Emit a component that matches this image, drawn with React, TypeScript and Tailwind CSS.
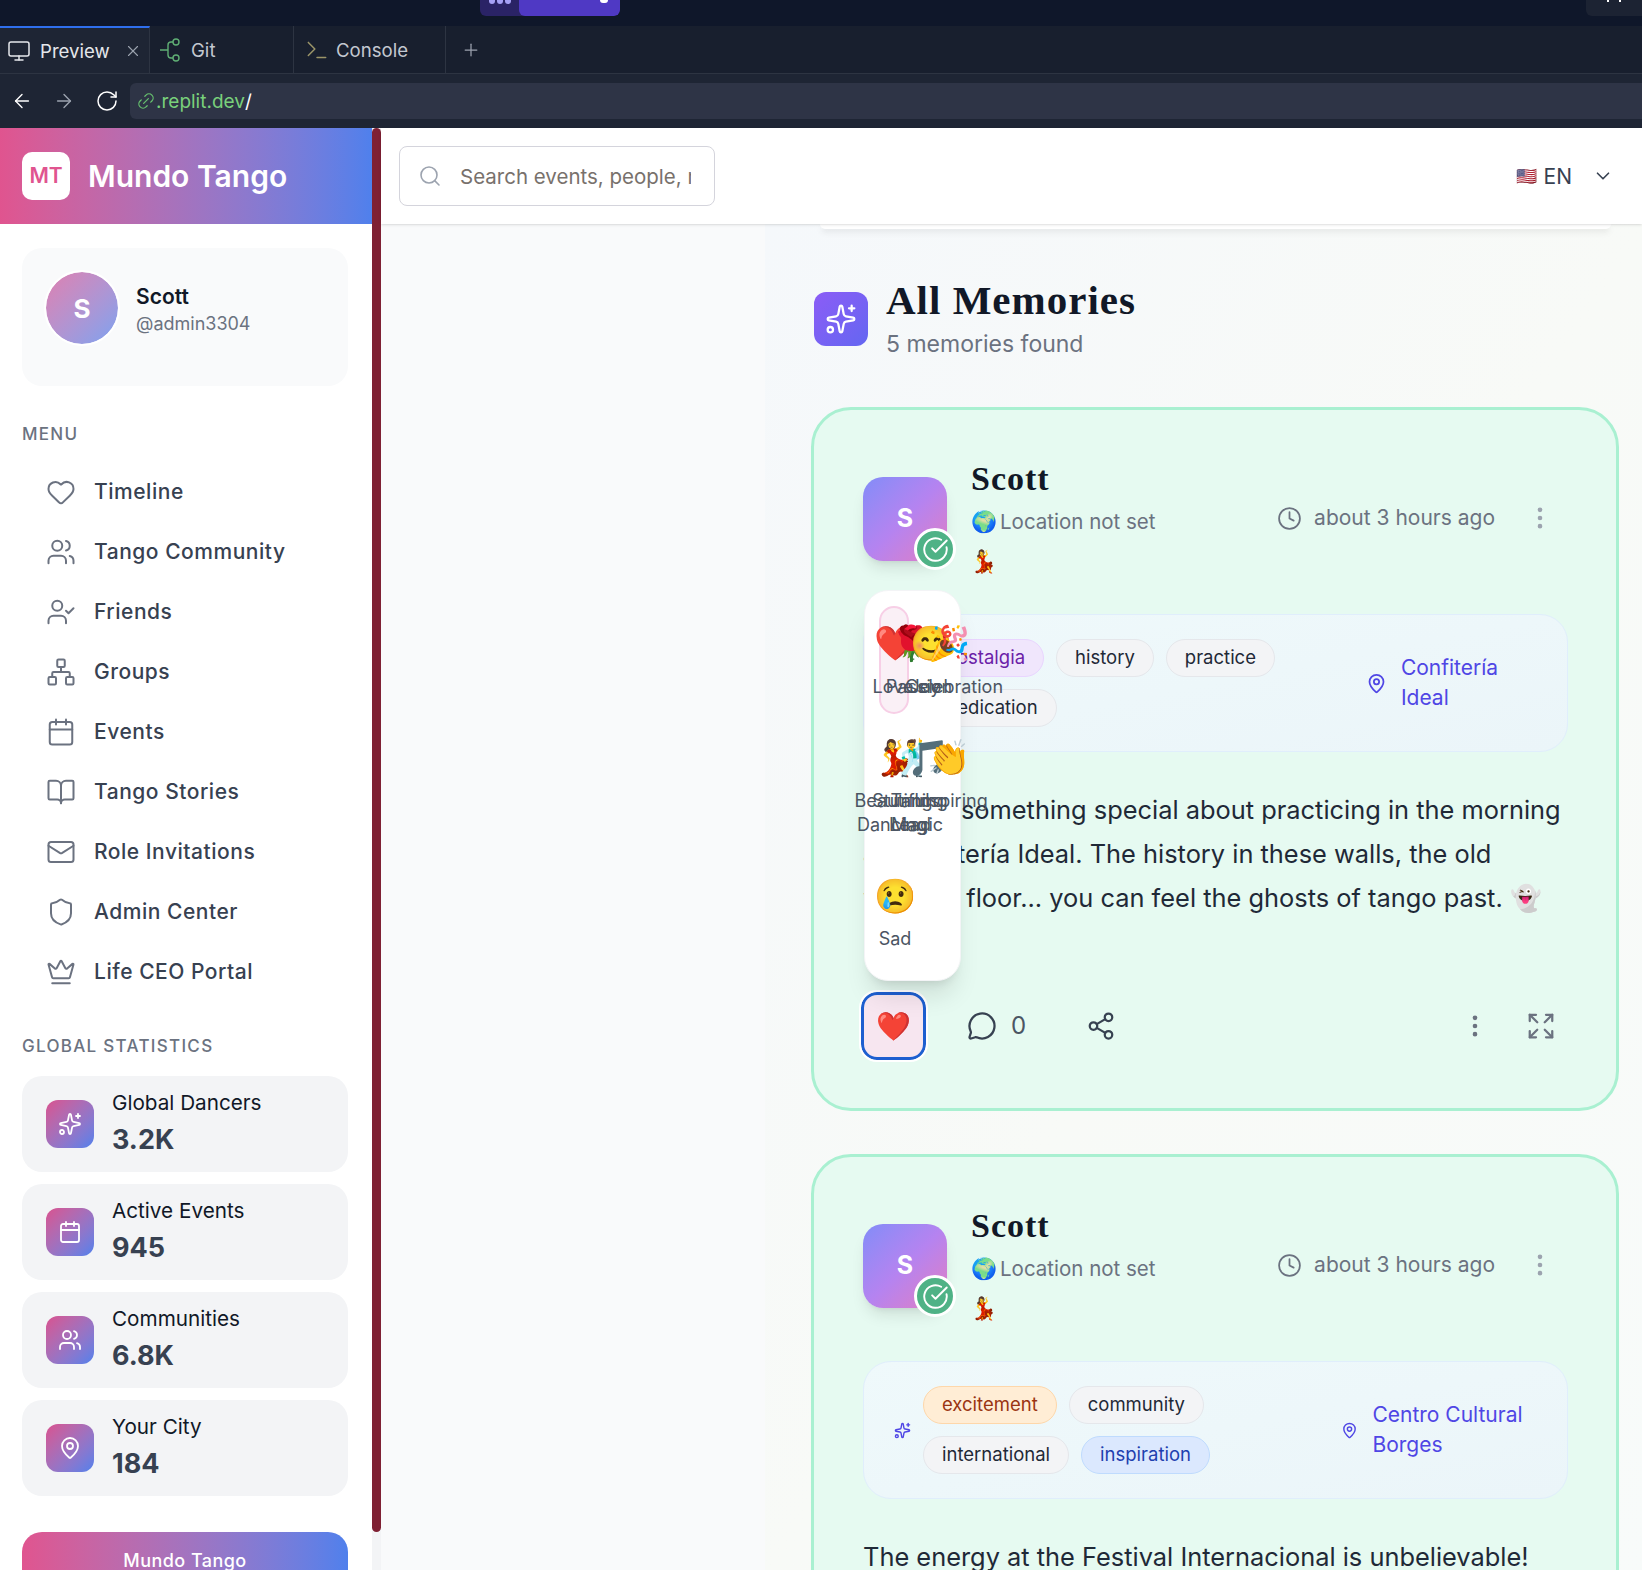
import React from "react";
import {
  ArrowLeft,
  ArrowRight,
  BookOpen,
  Calendar,
  ChevronDown,
  CircleCheckBig,
  Clock,
  Crown,
  EllipsisVertical,
  Expand,
  Heart,
  Link2,
  Mail,
  MapPin,
  MessageCircle,
  Monitor,
  Network,
  Plus,
  RotateCw,
  Search,
  Share2,
  Shield,
  Sparkles,
  Terminal,
  UserCheck,
  Users,
  X,
} from "lucide-react";

const menu = [
  { label: "Timeline", icon: Heart },
  { label: "Tango Community", icon: Users },
  { label: "Friends", icon: UserCheck },
  { label: "Groups", icon: Network },
  { label: "Events", icon: Calendar },
  { label: "Tango Stories", icon: BookOpen },
  { label: "Role Invitations", icon: Mail },
  { label: "Admin Center", icon: Shield },
  { label: "Life CEO Portal", icon: Crown },
];

const stats = [
  { label: "Global Dancers", value: "3.2K", icon: Sparkles },
  { label: "Active Events", value: "945", icon: Calendar },
  { label: "Communities", value: "6.8K", icon: Users },
  { label: "Your City", value: "184", icon: MapPin },
];

const tagStyles: Record<string, string> = {
  gray: "bg-[#f3f4f6] border-[#e5e7eb] text-[#1f2937]",
  purple: "bg-[#f0e6fc] border-[#e9d5ff] text-[#6b21a8]",
  orange: "bg-[#ffedd5] border-[#fed7aa] text-[#9a3412]",
  blue: "bg-[#dbe8fe] border-[#bfdbfe] text-[#1e40af]",
};

const GitIcon = () => (
  <svg width="24" height="24" viewBox="0 0 24 24" fill="none" stroke="#5fae74" strokeWidth="1.4" className="mr-[8px]">
    <path d="M1 12h8M9 12V7a3 3 0 0 1 3-3h2M9 12v5a3 3 0 0 0 3 3h2" />
    <circle cx="17" cy="4" r="3" />
    <circle cx="17" cy="20" r="3" />
  </svg>
);

const Tag = ({ label, tone = "gray" }: { label: string; tone?: string }) => (
  <span className={`h-[38px] px-[18px] rounded-full border flex items-center text-[18.5px] ${tagStyles[tone]}`}>
    {label}
  </span>
);

const MemoryCard = ({
  tags,
  place,
  pinSize,
  wideGap,
  text,
  children,
}: {
  tags: { label: string; tone?: string }[];
  place: string[];
  pinSize: number;
  wideGap?: boolean;
  text: string[];
  children?: React.ReactNode;
}) => (
  <div className="relative -ml-[1px] border-[3px] border-[#a9f0d1] rounded-[40px] bg-[#e6faf1] pt-[45px] pl-[49px] pr-[48px] pb-[48px] mb-[43px]">
    <div className="flex">
      <div className="relative w-[84px] h-[84px] mt-[22px] rounded-[20px] bg-gradient-to-br from-[#818cf8] via-[#b583f0] to-[#e27cc0] shadow-lg flex items-center justify-center text-white font-bold text-[25px] shrink-0">
        S
        <span className="absolute -right-[9px] -bottom-[9px] w-[42px] h-[42px] rounded-full bg-[#4fb286] border-[3px] border-white flex items-center justify-center">
          <CircleCheckBig size={27} className="text-white" strokeWidth={1.7} />
        </span>
      </div>
      <div className="ml-[24px] flex-1">
        <div className="font-['Liberation_Serif',serif] font-bold text-[34px] tracking-[1px] leading-[48px] text-[#111827]">Scott</div>
        <div className="flex items-center h-[38px]">
          <span className="text-[21px] w-[29px]">🌍</span>
          <span className="text-[20.5px] text-[#6b7280]">Location not set</span>
          <span className="ml-auto flex items-center text-[21px] text-[#6b7280] -translate-y-[4px]">
            <Clock size={25} strokeWidth={1.7} className="mr-[12px]" />
            about 3 hours ago
            <EllipsisVertical size={28} className="ml-[31px] mr-[14px] text-[#9ca3af]" />
          </span>
        </div>
        <div className="text-[22px] mt-[5px] -ml-[1px] leading-[30px]">💃</div>
      </div>
    </div>
    <div className="flex items-center mt-[38px] h-[138px] rounded-[28px] border border-[#e0eefc] bg-gradient-to-br from-[#eff9fb] to-[#ebf5f9] pl-[30px] pr-[30px]">
      <Sparkles size={17} className={`text-[#4f46e5] shrink-0 ${wideGap ? "mr-[16px]" : "mr-[12px]"}`} />
      <div className="flex flex-wrap gap-x-[12px] gap-y-[12px] w-[370px]">
        {tags.map((t) => (
          <Tag key={t.label} label={t.label} tone={t.tone} />
        ))}
      </div>
      <div className="ml-auto mr-[3px] w-[204px] flex justify-center items-center gap-[14px] text-[#4f46e5] text-[21px] leading-[30px]">
        <MapPin size={pinSize} className="shrink-0" />
        <div>
          {place.map((p) => (
            <div key={p}>{p}</div>
          ))}
        </div>
      </div>
    </div>
    <div className="mt-[36px] text-[25.4px] leading-[44px] text-[#1f2937] whitespace-nowrap">
      {text.map((l) => (
        <div key={l}>{l}</div>
      ))}
    </div>
    <div className="flex items-center mt-[72px] -ml-[2px]">
      <button className="w-[65px] h-[68px] rounded-[16px] border-[3px] border-[#1d5fd0] outline-2 outline-white bg-[#f7e6f0] text-[28px] flex items-center justify-center">
        ❤️
      </button>
      <MessageCircle size={30} strokeWidth={1.8} className="ml-[41px] text-[#374151]" />
      <span className="ml-[14px] text-[24px] text-[#4b5563]">0</span>
      <Share2 size={30} strokeWidth={1.8} className="ml-[60px] text-[#374151]" />
      <EllipsisVertical size={28} className="ml-auto text-[#6b7280]" />
      <Expand size={30} strokeWidth={1.8} className="ml-[37px] mr-[12px] text-[#6b7280]" />
    </div>
    {children}
  </div>
);

const ReactionPicker = () => {
  const top = [
    { e: "❤️", x: 30 },
    { e: "🌹", x: 46 },
    { e: "😊", x: 66 },
    { e: "🎉", x: 84 },
  ];
  const topLabels = [
    { t: "Love", x: 28 },
    { t: "Passion", x: 54 },
    { t: "Joy", x: 60 },
    { t: "Celebration", x: 89 },
  ];
  const mid = [
    { e: "💃", x: 30 },
    { e: "🕺", x: 48 },
    { e: "🎵", x: 64 },
    { e: "👏", x: 84 },
  ];
  const midLabels = [
    { t: ["Beautiful", "Dancing"], x: 27 },
    { t: ["Stunning", "Lead"], x: 45 },
    { t: ["Tango", "Magic"], x: 52 },
    { t: ["Inspiring"], x: 86 },
  ];
  return (
    <div className="absolute left-[50px] top-[180px] w-[97px] h-[391px] rounded-[24px] bg-white border border-[#f3f4f6] shadow-xl text-[#4b5563]">
      <div className="absolute left-[14px] top-[15px] w-[30px] h-[108px] rounded-full bg-[#faf0f6] border-2 border-[#f7cfe6]" />
      {top.map((i) => (
        <span key={i.e} className="absolute top-[32px] text-[34px] leading-[40px] -translate-x-1/2" style={{ left: i.x }}>
          {i.e}
        </span>
      ))}
      {topLabels.map((i) => (
        <span key={i.t} className="absolute top-[83px] text-[18px] leading-[26px] -translate-x-1/2" style={{ left: i.x }}>
          {i.t}
        </span>
      ))}
      {mid.map((i) => (
        <span key={i.e} className="absolute top-[146px] text-[35px] leading-[40px] -translate-x-1/2" style={{ left: i.x }}>
          {i.e}
        </span>
      ))}
      {midLabels.map((i) => (
        <span key={i.t[0]} className="absolute top-[198px] text-[18px] leading-[24px] text-center -translate-x-1/2" style={{ left: i.x }}>
          {i.t.map((l) => (
            <span key={l} className="block">
              {l}
            </span>
          ))}
        </span>
      ))}
      <span className="absolute left-[30px] top-[285px] text-[34px] leading-[40px] -translate-x-1/2">😢</span>
      <span className="absolute left-[30px] top-[335px] text-[18px] leading-[26px] -translate-x-1/2">Sad</span>
    </div>
  );
};

export default function App() {
  return (
    <div className="w-[1642px] h-[1570px] overflow-hidden flex flex-col font-['Inter',sans-serif] bg-white">
      {/* Browser chrome */}
      <div className="h-[26px] bg-[#0f172a] flex shrink-0">
        <div className="ml-[480px] h-[16px] w-[140px] rounded-b-[6px] bg-[#2a2366] flex overflow-hidden">
          <div className="w-[39px] flex justify-center gap-[2px]">
            <span className="w-[6px] h-[4px] rounded-b-full bg-[#a5a0f5]" />
            <span className="w-[6px] h-[4px] rounded-b-full bg-[#a5a0f5]" />
            <span className="w-[6px] h-[4px] rounded-b-full bg-[#a5a0f5]" />
          </div>
          <div className="flex-1 rounded-b-[6px] bg-[#4f39c4] flex justify-end pr-[12px]">
            <span className="w-[8px] h-[3px] rounded-b-full bg-white" />
          </div>
        </div>
        <div className="ml-auto h-[16px] w-[56px] rounded-bl-[6px] bg-[#1c2333] flex justify-center gap-[10px]">
          <span className="w-[2px] h-[2px] bg-white" />
          <span className="w-[2px] h-[2px] bg-white" />
        </div>
      </div>
      <div className="h-[48px] bg-[#181f2e] border-b border-[#2d3442] flex items-stretch text-[18.6px] shrink-0">
        <div className="w-[150px] bg-[#1e2534] border-t-2 border-[#2f6fed] border-r border-r-[#2d3442] flex items-center pl-[7px] text-[#e5e7eb]">
          <Monitor size={24} strokeWidth={1.5} className="mr-[9px]" />
          <span className="pt-[3px]">Preview</span>
          <X size={18} strokeWidth={1.5} className="ml-auto mr-[7px] text-[#9ca3af]" />
        </div>
        <div className="w-[144px] border-r border-[#2d3442] flex items-center pl-[9px] text-[#c3c8d0]">
          <GitIcon />
          <span className="pt-[3px]">Git</span>
        </div>
        <div className="w-[152px] border-r border-[#2d3442] flex items-center pl-[10px] text-[#c3c8d0]">
          <Terminal size={26} strokeWidth={1.4} className="mr-[6px] text-[#9a9468]" />
          <span className="pt-[3px]">Console</span>
        </div>
        <Plus size={20} strokeWidth={1.5} className="ml-[15px] self-center text-[#9ca3af]" />
      </div>
      <div className="h-[54px] bg-[#1e2534] flex items-center text-white shrink-0">
        <ArrowLeft size={22} strokeWidth={1.5} className="ml-[11px]" />
        <ArrowRight size={22} strokeWidth={1.5} className="ml-[20px] text-[#9ca3af]" />
        <RotateCw size={24} strokeWidth={1.5} className="ml-[20px]" />
        <div className="ml-[11px] flex-1 h-[36px] rounded-l-[6px] bg-[#2e3446] flex items-center pl-[6px] text-[19px]">
          <Link2 size={20} strokeWidth={1.5} className="text-[#66c06e] -rotate-45" />
          <span className="text-[#79d07b] pt-[2px]">.replit.dev</span>
          <span className="pt-[2px]">/</span>
        </div>
      </div>

      <div className="flex flex-1 min-h-0">
        {/* Sidebar */}
        <aside className="w-[372px] shrink-0 bg-white flex flex-col overflow-hidden">
          <div className="h-[96px] bg-gradient-to-r from-[#e0548f] to-[#4f80ec] flex items-center pl-[22px] shrink-0">
            <div className="w-[48px] h-[48px] rounded-[10px] bg-white flex items-center justify-center text-[#e0548f] font-semibold text-[21px]">
              MT
            </div>
            <span className="ml-[18px] text-white font-semibold text-[30px]">Mundo Tango</span>
          </div>
          <div className="ml-[22px] w-[326px] mt-[24px] h-[138px] shrink-0 rounded-[20px] bg-[#f9fafb] flex pl-[24px] pt-[24px]">
            <div className="w-[72px] h-[72px] rounded-full outline-2 outline-white bg-gradient-to-br from-[#de7fb0] to-[#7aa2f0] flex items-center justify-center text-white font-bold text-[26px]">
              S
            </div>
            <div className="ml-[18px] mt-[10px]">
              <div className="text-[21px] leading-[30px] font-semibold text-[#111827]">Scott</div>
              <div className="text-[18px] leading-[24px] text-[#6b7280]">@admin3304</div>
            </div>
          </div>
          <div className="mx-[22px] mt-[36px] text-[17px] leading-[24px] font-medium tracking-[1.3px] text-[#6b7280] shrink-0">MENU</div>
          <nav className="mt-[16px] shrink-0">
            {menu.map(({ label, icon: Icon }) => (
              <div key={label} className="h-[60px] flex items-center pl-[46px] text-[21px] font-medium tracking-wide text-[#374151]">
                <Icon size={30} strokeWidth={1.6} className="text-[#6b7280] mr-[18px]" />
                {label}
              </div>
            ))}
          </nav>
          <div className="mx-[22px] mt-[32px] text-[17px] leading-[24px] font-medium tracking-[1.3px] text-[#6b7280] shrink-0">GLOBAL STATISTICS</div>
          <div className="ml-[22px] w-[326px] mt-[18px] flex flex-col gap-[12px] shrink-0">
            {stats.map(({ label, value, icon: Icon }) => (
              <div key={label} className="h-[96px] rounded-[20px] bg-[#f3f4f6] flex items-center pl-[24px]">
                <div className="w-[48px] h-[48px] rounded-[12px] bg-gradient-to-br from-[#d9508f] to-[#4f80ec] flex items-center justify-center text-white">
                  <Icon size={24} strokeWidth={1.8} />
                </div>
                <div className="ml-[18px]">
                  <div className="text-[20.7px] leading-[30px] text-[#111827]">{label}</div>
                  <div className="text-[27px] leading-[41px] pt-[1px] font-bold text-[#374151]">{value}</div>
                </div>
              </div>
            ))}
          </div>
          <div className="ml-[22px] w-[326px] mt-[36px] h-[38px] shrink-0 rounded-t-[20px] bg-gradient-to-r from-[#e0548f] to-[#4f80ec] text-white text-[18px] font-medium tracking-wide flex justify-center pt-[15px]">
            Mundo Tango
          </div>
        </aside>

        {/* Scrollbar */}
        <div className="w-[9px] shrink-0 bg-[#f3f4f6]">
          <div className="h-[1404px] rounded-full bg-[#7f2033]" />
        </div>

        {/* Main */}
        <main className="flex-1 min-w-0 flex flex-col bg-[#f9fafb]">
          <header className="relative z-10 h-[96px] shrink-0 bg-white shadow-sm flex items-center pl-[18px]">
            <div className="w-[316px] h-[60px] rounded-[8px] border border-[#d4d4dc] bg-white flex items-center pl-[18px] pr-[23px]">
              <Search size={24} strokeWidth={1.6} className="text-[#9ca3af] shrink-0" />
              <span className="ml-[18px] pt-[2px] flex-1 min-w-0 text-[20.5px] text-[#78716c] whitespace-nowrap overflow-hidden">Search events, people, memories</span>
            </div>
            <div className="ml-auto flex items-center text-[21px] text-[#374151]">
              <span className="text-[17px] pt-[1px]">🇺🇸</span>
              <span className="ml-[7px] pt-[1px]">EN</span>
              <ChevronDown size={22} strokeWidth={1.8} className="ml-[20px] mr-[28px]" />
            </div>
          </header>
          <div className="flex-1 min-h-0 ml-[384px] pl-[47px] pr-[23px] bg-gradient-to-br from-[#f5f8fb] via-[#f8faf7] to-[#f8fbfa] overflow-hidden">
            <div className="h-[5px] mx-[8px] rounded-b-[20px] bg-white shadow-md" />
            <div className="flex mt-[47px] ml-[2px] items-center">
              <div className="w-[54px] h-[54px] rounded-[12px] bg-gradient-to-br from-[#8b5cf6] to-[#6366f1] flex items-center justify-center text-white">
                <Sparkles size={32} strokeWidth={1.7} />
              </div>
              <div className="ml-[18px] -mt-[3px] pt-[3px]">
                <div className="font-['Liberation_Serif',serif] font-bold text-[41px] tracking-[1px] leading-[48px] text-[#111827]">All Memories</div>
                <div className="text-[23px] leading-[36px] mt-[2px] text-[#6b7280]">5 memories found</div>
              </div>
            </div>
            <div className="mt-[45px]">
              <MemoryCard
                tags={[
                  { label: "nostalgia", tone: "purple" },
                  { label: "history" },
                  { label: "practice" },
                  { label: "dedication" },
                ]}
                place={["Confitería", "Ideal"]}
                pinSize={21}
                wideGap
                text={[
                  "There's something special about practicing in the morning",
                  "at Confitería Ideal. The history in these walls, the old",
                  "wooden floor... you can feel the ghosts of tango past. 👻",
                ]}
              >
                <ReactionPicker />
              </MemoryCard>
              <MemoryCard
                tags={[
                  { label: "excitement", tone: "orange" },
                  { label: "community" },
                  { label: "international" },
                  { label: "inspiration", tone: "blue" },
                ]}
                place={["Centro Cultural", "Borges"]}
                pinSize={17}
                text={["The energy at the Festival Internacional is unbelievable!"]}
              />
            </div>
          </div>
        </main>
      </div>
    </div>
  );
}
